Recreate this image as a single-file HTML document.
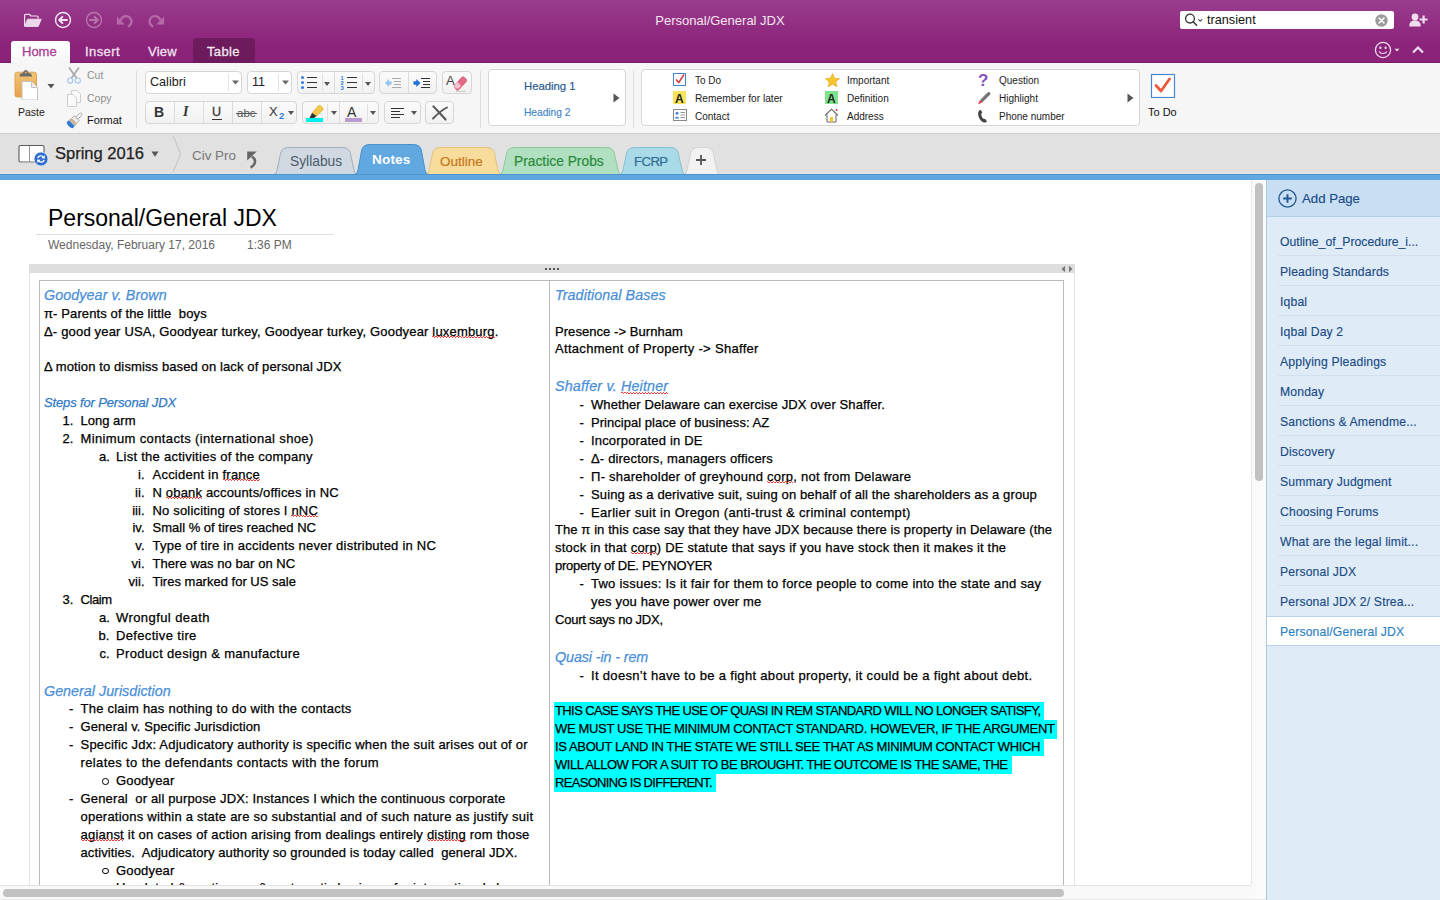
<!DOCTYPE html>
<html><head><meta charset="utf-8">
<style>
*{box-sizing:border-box;margin:0;padding:0}
html,body{width:1440px;height:900px;overflow:hidden;background:#fff;font-family:"Liberation Sans",sans-serif}
.abs{position:absolute}
#titlebar{position:absolute;left:0;top:0;width:1440px;height:63px;background:linear-gradient(#993d8d 0,#8c237a 72%,#8b2279 100%);border-bottom:1px solid #7c1b6b}
#ribbon{position:absolute;left:0;top:63px;width:1440px;height:71px;background:#f6f6f6;border-bottom:1px solid #cfcfcf}
#nbbar{position:absolute;left:0;top:134px;width:1440px;height:40px;background:#e1e1e1}
#blue{position:absolute;left:0;top:174px;width:1440px;height:6px;background:#5fa7de;border-top:1px solid #4b94cf}
#page{position:absolute;left:0;top:180px;width:1251px;height:705px;background:#fff;overflow:hidden}
#vscroll{position:absolute;left:1251px;top:180px;width:15px;height:705px;background:#fafafa;border-left:1px solid #e6e6e6}
#hscroll{position:absolute;left:0;top:885px;width:1251px;height:15px;background:#f9f9f9;border-top:1px solid #e3e3e3}
#sidebar{position:absolute;left:1266px;top:180px;width:174px;height:720px;background:#dfebf6;border-left:1px solid #a9c8e6}
.btn{border:1px solid #d6d6d6;border-radius:4px;background:linear-gradient(#fbfbfb,#f1f1f1)}
#ribbon .abs{}
.ln{position:absolute;white-space:pre;line-height:normal}
.sp{position:relative}.sp::after{content:"";position:absolute;left:0;right:0;top:0.93em;height:2px;background-image:repeating-linear-gradient(90deg,#f0423a 0 1.5px,transparent 1.5px 3px),repeating-linear-gradient(90deg,transparent 0 1.5px,#f0423a 1.5px 3px);background-size:100% 1px,100% 1px;background-position:0 0,0 1px;background-repeat:no-repeat}
</style></head><body>
<div id="titlebar">
<svg class="abs" style="left:23px;top:13px" width="19" height="15" viewBox="0 0 19 15"><path d="M1.6 13 V2.6 Q1.6 1.4 2.8 1.4 H6.4 L8 3 H14 Q15 3 15 4 V5.6" fill="none" stroke="#f2e2f0" stroke-width="1.2" stroke-linejoin="round"/><path d="M1.6 13.4 L4.6 6.2 H18.2 L15.2 13.4 Z" fill="#ecd8ea" stroke="#f2e2f0" stroke-width="0.9" stroke-linejoin="round"/></svg>
<svg class="abs" style="left:54px;top:11px" width="18" height="18" viewBox="0 0 18 18"><circle cx="9" cy="9" r="7.5" fill="none" stroke="#f4e6f2" stroke-width="1.4"/><path d="M13 9 H5.4 M8.4 5.8 L5.2 9 L8.4 12.2" fill="none" stroke="#f4e6f2" stroke-width="1.9" stroke-linecap="round" stroke-linejoin="round"/></svg>
<svg class="abs" style="left:85px;top:11px" width="18" height="18" viewBox="0 0 18 18"><circle cx="9" cy="9" r="7.5" fill="none" stroke="#b977ad" stroke-width="1.3"/><path d="M5 9 H12.6 M9.6 5.8 L12.8 9 L9.6 12.2" fill="none" stroke="#b977ad" stroke-width="1.8" stroke-linecap="round" stroke-linejoin="round"/></svg>
<svg class="abs" style="left:116px;top:12px" width="17" height="16" viewBox="0 0 17 16"><path d="M4.8 8.2 A5.4 5.4 0 1 1 11.8 14.6" fill="none" stroke="#b56aa8" stroke-width="2.3"/><path d="M0.9 4.6 V12.4 H8.7 Z" fill="#b56aa8"/></svg>
<svg class="abs" style="left:148px;top:12px" width="17" height="16" viewBox="0 0 17 16"><path d="M12.2 8.2 A5.4 5.4 0 1 0 5.2 14.6" fill="none" stroke="#b56aa8" stroke-width="2.3"/><path d="M16.1 4.6 V12.4 H8.3 Z" fill="#b56aa8"/></svg>
<div class="abs" style="left:0;top:13px;width:1440px;text-align:center;font-size:13px;color:#f3e6f1;line-height:15px">Personal/General JDX</div>
<div class="abs" style="left:1180px;top:11px;width:214px;height:18px;background:#fff;border-radius:2px"></div>
<svg class="abs" style="left:1184px;top:13px" width="22" height="14" viewBox="0 0 22 14"><circle cx="6" cy="5.6" r="4.4" fill="none" stroke="#333" stroke-width="1.3"/><path d="M9.2 8.8 L12.6 12.2" stroke="#333" stroke-width="1.5" stroke-linecap="round"/><path d="M14.2 6.2 L16.2 8.2 L18.2 6.2" fill="none" stroke="#555" stroke-width="1.1"/></svg>
<div class="abs" style="left:1207px;top:13px;font-size:12.7px;color:#111;line-height:15px">transient</div>
<svg class="abs" style="left:1375px;top:14px" width="13" height="13" viewBox="0 0 13 13"><circle cx="6.5" cy="6.5" r="6.2" fill="#9b9b9b"/><path d="M4 4 L9 9 M9 4 L4 9" stroke="#fff" stroke-width="1.5" stroke-linecap="round"/></svg>
<svg class="abs" style="left:1409px;top:13px" width="19" height="14" viewBox="0 0 19 14"><circle cx="6" cy="4" r="3.4" fill="#efdcec"/><path d="M0.3 13.5 C0.3 9 2.5 7.6 6 7.6 C9.5 7.6 11.7 9 11.7 13.5 Z" fill="#efdcec"/><path d="M14.6 2.5 V10.5 M10.6 6.5 H18.6" stroke="#efdcec" stroke-width="2.2"/></svg>
<div class="abs" style="left:11px;top:41px;width:59px;height:22px;background:linear-gradient(#fff,#f6f6f6);border-radius:3px 3px 0 0"></div>
<div class="abs" style="left:22px;top:44px;font-size:13px;color:#aa3f96;line-height:15px;-webkit-text-stroke:0.3px #aa3f96">Home</div>
<div class="abs" style="left:85px;top:44px;font-size:13px;letter-spacing:0.4px;color:#f1e1ee;line-height:15px;-webkit-text-stroke:0.3px #f1e1ee">Insert</div>
<div class="abs" style="left:148px;top:44px;font-size:13px;letter-spacing:0.2px;color:#f1e1ee;line-height:15px;-webkit-text-stroke:0.3px #f1e1ee">View</div>
<div class="abs" style="left:193px;top:38px;width:62px;height:25px;background:#6d1b5c;border-radius:3px 3px 0 0"></div>
<div class="abs" style="left:207px;top:44px;font-size:13px;letter-spacing:0.35px;color:#f3e6f1;line-height:15px;-webkit-text-stroke:0.3px #f3e6f1">Table</div>
<svg class="abs" style="left:1374px;top:41px" width="32" height="18" viewBox="0 0 32 18"><circle cx="9" cy="9" r="7.6" fill="none" stroke="#efdcec" stroke-width="1.3"/><ellipse cx="6.4" cy="6.8" rx="1.1" ry="1.4" fill="#efdcec"/><ellipse cx="11.6" cy="6.8" rx="1.1" ry="1.4" fill="#efdcec"/><path d="M5.2 10.4 C6.5 13.2 11.5 13.2 12.8 10.4" fill="none" stroke="#efdcec" stroke-width="1.2"/><path d="M20.5 7.8 L25.5 7.8 L23 10.6 Z" fill="#efdcec"/></svg>
<svg class="abs" style="left:1411px;top:45px" width="14" height="10" viewBox="0 0 14 10"><path d="M2 7.5 L7 2.5 L12 7.5" fill="none" stroke="#efdcec" stroke-width="2.2"/></svg>
</div>
<div id="ribbon">
<!-- paste -->
<svg class="abs" style="left:14px;top:6px" width="27" height="31" viewBox="0 0 27 31"><defs><linearGradient id="cb" x1="0" y1="0" x2="0" y2="1"><stop offset="0" stop-color="#f1c476"/><stop offset="1" stop-color="#e6a24a"/></linearGradient></defs><rect x="1" y="3.2" width="21.5" height="24.8" rx="2" fill="url(#cb)" stroke="#d79a45" stroke-width="0.8"/><path d="M5.5 7.5 C5.5 5 7 4 9 4 C9.5 2 10.5 1 11.8 1 C13.1 1 14.1 2 14.6 4 C16.6 4 18 5 18 7.5 Z" fill="#6b6b6b"/><circle cx="11.8" cy="3.6" r="1" fill="#e6b066"/><path d="M8 12.5 H17.5 L23.5 18.5 V31 H8 Z" fill="#fff" stroke="#bdbdbd" stroke-width="0.9"/><path d="M17.5 12.5 V18.5 H23.5" fill="#eee" stroke="#bdbdbd" stroke-width="0.9"/></svg>
<svg class="abs" style="left:47px;top:20px" width="8" height="6" viewBox="0 0 8 6"><path d="M0.5 1 L7.5 1 L4 5.5 Z" fill="#555"/></svg>
<div class="abs" style="left:18px;top:43px;font-size:10.5px;color:#222;line-height:13px">Paste</div>
<svg class="abs" style="left:66px;top:4px" width="16" height="17" viewBox="0 0 16 17"><path d="M3 0.5 L10.5 11 M13 0.5 L5.5 11" stroke="#a9a9a9" stroke-width="1.7"/><circle cx="4.2" cy="13.6" r="2.6" fill="none" stroke="#a9c6e8" stroke-width="1.2"/><circle cx="11.8" cy="13.6" r="2.6" fill="none" stroke="#a9c6e8" stroke-width="1.2"/></svg>
<div class="abs" style="left:87px;top:6px;font-size:10.5px;color:#8e8e8e;line-height:13px">Cut</div>
<svg class="abs" style="left:67px;top:27px" width="15" height="17" viewBox="0 0 15 17"><path d="M4.5 0.5 H10 L13.5 4 V12.5 H4.5 Z" fill="#fafafa" stroke="#cdcdcd" stroke-width="1"/><path d="M0.5 4.5 H6 L9.5 8 V16.5 H0.5 Z" fill="#fafafa" stroke="#cdcdcd" stroke-width="1"/></svg>
<div class="abs" style="left:87px;top:29px;font-size:10.5px;color:#8e8e8e;line-height:13px">Copy</div>
<svg class="abs" style="left:64px;top:49px" width="20" height="18" viewBox="0 0 20 18"><g transform="rotate(45 10 9)"><rect x="8.6" y="-1.5" width="2.8" height="7" rx="1.4" fill="#fdfdfd" stroke="#8a8a8a" stroke-width="0.8"/><rect x="6.5" y="5" width="7" height="4" fill="#ececec" stroke="#9a9a9a" stroke-width="0.7"/><rect x="5.8" y="9" width="8.4" height="3.2" fill="#cdb79c"/><path d="M5.8 12.2 H14.2 V15.2 Q10 17.4 5.8 15.2 Z" fill="#2c78d4"/></g></svg>
<div class="abs" style="left:87px;top:51px;font-size:11px;color:#111;line-height:13px">Format</div>
<div class="abs" style="left:136px;top:8px;width:1px;height:57px;background:#dedede"></div>
<!-- font -->
<div class="abs btn" style="left:145px;top:8px;width:97px;height:23px;background:#fff"></div>
<div class="abs" style="left:150px;top:12px;font-size:12.6px;color:#222;line-height:15px">Calibri</div>
<div class="abs" style="left:228px;top:11px;width:1px;height:17px;background:#e2e2e2"></div>
<svg class="abs" style="left:232px;top:17px" width="7" height="5" viewBox="0 0 7 5"><path d="M0 0.5 H7 L3.5 4.5 Z" fill="#666"/></svg>
<div class="abs btn" style="left:247px;top:8px;width:45px;height:23px;background:#fff"></div>
<div class="abs" style="left:252px;top:12px;font-size:12.6px;color:#222;line-height:15px">11</div>
<div class="abs" style="left:278px;top:11px;width:1px;height:17px;background:#e2e2e2"></div>
<svg class="abs" style="left:282px;top:17px" width="7" height="5" viewBox="0 0 7 5"><path d="M0 0.5 H7 L3.5 4.5 Z" fill="#666"/></svg>
<!-- lists -->
<div class="abs btn" style="left:297px;top:8px;width:78px;height:23px"></div>
<div class="abs" style="left:334px;top:9px;width:1px;height:21px;background:#dcdcdc"></div>
<svg class="abs" style="left:300px;top:12px" width="20" height="16" viewBox="0 0 20 16"><circle cx="2.5" cy="2.5" r="1.5" fill="#2f7ad8"/><circle cx="2.5" cy="7.5" r="1.5" fill="#2f7ad8"/><circle cx="2.5" cy="12.5" r="1.5" fill="#2f7ad8"/><path d="M7 2.5 H17 M7 7.5 H17 M7 12.5 H17" stroke="#333" stroke-width="1"/></svg>
<div class="abs" style="left:322px;top:11px;width:1px;height:17px;background:#e0e0e0"></div>
<svg class="abs" style="left:324px;top:19px" width="6" height="4" viewBox="0 0 6 4"><path d="M0 0 H6 L3 4 Z" fill="#555"/></svg>
<svg class="abs" style="left:340px;top:11px" width="20" height="18" viewBox="0 0 20 18"><text x="0.5" y="6" font-size="5.8" font-weight="bold" fill="#2f7ad8" font-family="Liberation Sans">1</text><text x="0.5" y="11" font-size="5.8" font-weight="bold" fill="#2f7ad8" font-family="Liberation Sans">2</text><text x="0.5" y="16" font-size="5.8" font-weight="bold" fill="#2f7ad8" font-family="Liberation Sans">3</text><path d="M7 3.5 H17 M7 8.5 H17 M7 13.5 H17" stroke="#333" stroke-width="1"/></svg>
<div class="abs" style="left:362px;top:11px;width:1px;height:17px;background:#e0e0e0"></div>
<svg class="abs" style="left:365px;top:19px" width="6" height="4" viewBox="0 0 6 4"><path d="M0 0 H6 L3 4 Z" fill="#555"/></svg>
<div class="abs btn" style="left:379px;top:8px;width:58px;height:23px"></div>
<div class="abs" style="left:408px;top:9px;width:1px;height:21px;background:#dcdcdc"></div>
<svg class="abs" style="left:384px;top:14px" width="18" height="12" viewBox="0 0 18 12"><path d="M0.8 6 L5 2 V4.3 H7.5 V7.7 H5 V10 Z" fill="#9dc4ee"/><path d="M8 1.5 H17 M10 4.5 H17 M10 7.5 H17 M8 10.5 H17" stroke="#aaa" stroke-width="1"/></svg>
<svg class="abs" style="left:413px;top:14px" width="18" height="12" viewBox="0 0 18 12"><path d="M7.5 6 L3.3 2 V4.3 H0.5 V7.7 H3.3 V10 Z" fill="#1f72d6"/><path d="M8 1.5 H17 M10 4.5 H17 M10 7.5 H17 M8 10.5 H17" stroke="#333" stroke-width="1"/></svg>
<div class="abs btn" style="left:442px;top:8px;width:30px;height:23px"></div>
<svg class="abs" style="left:446px;top:10px" width="22" height="19" viewBox="0 0 22 19"><text x="0" y="12" font-size="13" fill="#444" font-family="Liberation Sans">A</text><path d="M8 13 L15.5 4.5 C16.5 3.5 17.5 3.5 18.5 4.5 L20 6 C21 7 21 8 20 9 L13 16.5 C12 17.5 11 17.5 10 16.5 Z" fill="#e26a86" stroke="#c84c6a" stroke-width="0.6"/><path d="M8 13 L11.5 9 L15 12.8 L13 15 C12 16 11 16 10 15 Z" fill="#f7c3cf"/><path d="M10 18.3 H20" stroke="#bbb" stroke-width="0.8"/></svg>
<!-- row 2 -->
<div class="abs btn" style="left:145px;top:38px;width:152px;height:23px"></div>
<div class="abs" style="left:174px;top:39px;width:1px;height:21px;background:#dcdcdc"></div>
<div class="abs" style="left:203px;top:39px;width:1px;height:21px;background:#dcdcdc"></div>
<div class="abs" style="left:232px;top:39px;width:1px;height:21px;background:#dcdcdc"></div>
<div class="abs" style="left:261px;top:39px;width:1px;height:21px;background:#dcdcdc"></div>
<div class="abs" style="left:154px;top:41px;font-size:14px;font-weight:bold;color:#333;line-height:16px">B</div>
<div class="abs" style="left:183px;top:41px;font-size:14px;font-style:italic;font-weight:bold;font-family:'Liberation Serif';color:#333;line-height:16px">I</div>
<div class="abs" style="left:212px;top:42px;font-size:12.5px;color:#333;line-height:15px;-webkit-text-stroke:0.3px #333">U</div>
<div class="abs" style="left:212px;top:56px;width:10px;height:1px;background:#333"></div>
<div class="abs" style="left:237px;top:43px;font-size:11.5px;color:#555;line-height:15px">abc</div>
<div class="abs" style="left:236px;top:50px;width:21px;height:1px;background:#555"></div>
<div class="abs" style="left:269px;top:41px;font-size:13px;color:#333;line-height:15px">X</div>
<div class="abs" style="left:279px;top:47px;font-size:9.5px;font-weight:bold;color:#2f7fd8;line-height:12px">2</div>
<svg class="abs" style="left:288px;top:48px" width="6" height="4" viewBox="0 0 6 4"><path d="M0 0 H6 L3 4 Z" fill="#555"/></svg>
<div class="abs btn" style="left:302px;top:38px;width:77px;height:23px"></div>
<div class="abs" style="left:339px;top:39px;width:1px;height:21px;background:#dcdcdc"></div>
<svg class="abs" style="left:305px;top:41px" width="20" height="18" viewBox="0 0 20 18"><path d="M7 9 L13 2 C14 1 15 1 16 2 L17.5 3.5 C18.5 4.5 18.5 5.3 17.5 6.3 L11.5 12 Z" fill="#f3c64c" stroke="#d9a92c" stroke-width="0.6"/><path d="M7 9 L11.5 12 L9 14 L4.5 14 Z" fill="#333"/><rect x="1" y="14" width="17" height="4" fill="#00eeee"/></svg>
<div class="abs" style="left:327px;top:41px;width:1px;height:17px;background:#e0e0e0"></div>
<svg class="abs" style="left:331px;top:48px" width="6" height="4" viewBox="0 0 6 4"><path d="M0 0 H6 L3 4 Z" fill="#555"/></svg>
<svg class="abs" style="left:344px;top:41px" width="20" height="18" viewBox="0 0 20 18"><text x="3" y="12.5" font-size="14" fill="#333" font-family="Liberation Sans">A</text><rect x="1" y="14" width="17" height="4" fill="#b99ace"/></svg>
<div class="abs" style="left:367px;top:41px;width:1px;height:17px;background:#e0e0e0"></div>
<svg class="abs" style="left:370px;top:48px" width="6" height="4" viewBox="0 0 6 4"><path d="M0 0 H6 L3 4 Z" fill="#555"/></svg>
<div class="abs btn" style="left:384px;top:38px;width:37px;height:23px"></div>
<svg class="abs" style="left:391px;top:43px" width="15" height="13" viewBox="0 0 15 13"><path d="M0 2.5 H13 M0 5.5 H9 M0 8.5 H13 M0 11.5 H9" stroke="#333" stroke-width="1"/></svg>
<svg class="abs" style="left:411px;top:48px" width="6" height="4" viewBox="0 0 6 4"><path d="M0 0 H6 L3 4 Z" fill="#555"/></svg>
<div class="abs btn" style="left:425px;top:38px;width:29px;height:23px"></div>
<svg class="abs" style="left:431px;top:42px" width="18" height="16" viewBox="0 0 18 16"><path d="M2.5 1.5 C6 5 10 9.5 14.5 14.5" fill="none" stroke="#5a5a5a" stroke-width="2.2" stroke-linecap="round"/><path d="M16 2.5 C11 5 6 9.5 2 13.5" fill="none" stroke="#5a5a5a" stroke-width="1.9" stroke-linecap="round"/></svg>
<div class="abs" style="left:480px;top:8px;width:1px;height:57px;background:#dedede"></div>
<!-- styles -->
<div class="abs btn" style="left:488px;top:6px;width:138px;height:57px;background:#fff"></div>
<div class="abs" style="left:524px;top:16px;font-size:11.3px;color:#2b5a8f;line-height:14px;-webkit-text-stroke:0.2px #2b5a8f">Heading 1</div>
<div class="abs" style="left:524px;top:43px;font-size:10.2px;color:#3f86cc;line-height:13px;-webkit-text-stroke:0.15px #3f86cc">Heading 2</div>
<svg class="abs" style="left:613px;top:30px" width="7" height="10" viewBox="0 0 7 10"><path d="M0.5 0.5 L6.5 5 L0.5 9.5 Z" fill="#555"/></svg>
<div class="abs" style="left:633px;top:8px;width:1px;height:57px;background:#dedede"></div>
<!-- tags -->
<div class="abs btn" style="left:641px;top:6px;width:499px;height:57px;background:#fff"></div>
<svg class="abs" style="left:673px;top:10px" width="14" height="13" viewBox="0 0 14 13"><rect x="0.5" y="0.5" width="12" height="12" fill="#fff" stroke="#4a86cf" stroke-width="1"/><path d="M3 6.5 L5.8 9.5 L11 1.5" fill="none" stroke="#e2343c" stroke-width="1.5"/></svg>
<div class="abs" style="left:695px;top:12px;font-size:10px;color:#222;line-height:12px">To Do</div>
<svg class="abs" style="left:673px;top:28px" width="13" height="13" viewBox="0 0 13 13"><rect x="0" y="0" width="13" height="13" fill="#f7e45a"/><text x="2" y="11.5" font-size="12" font-weight="bold" fill="#222" font-family="Liberation Sans">A</text></svg>
<div class="abs" style="left:695px;top:30px;font-size:10.2px;color:#222;line-height:12px">Remember for later</div>
<svg class="abs" style="left:673px;top:46px" width="14" height="12" viewBox="0 0 14 12"><rect x="0.5" y="0.5" width="13" height="11" fill="#fff" stroke="#888" stroke-width="1"/><circle cx="4" cy="4.2" r="1.5" fill="#4a86cf"/><path d="M1.8 9.5 C1.8 7 6.2 7 6.2 9.5 Z" fill="#4a86cf"/><path d="M7.5 3.5 H12 M7.5 6 H12 M7.5 8.5 H12" stroke="#888" stroke-width="0.9"/></svg>
<div class="abs" style="left:695px;top:48px;font-size:10px;color:#222;line-height:12px">Contact</div>
<svg class="abs" style="left:825px;top:10px" width="15" height="15" viewBox="0 0 15 15"><path d="M7.5 0.5 L9.6 5.2 L14.6 5.6 L10.8 8.9 L12 13.9 L7.5 11.2 L3 13.9 L4.2 8.9 L0.4 5.6 L5.4 5.2 Z" fill="#f5c530" stroke="#e0a81a" stroke-width="0.6"/></svg>
<div class="abs" style="left:847px;top:12px;font-size:10px;color:#222;line-height:12px">Important</div>
<svg class="abs" style="left:825px;top:28px" width="13" height="13" viewBox="0 0 13 13"><rect x="0" y="0" width="13" height="13" fill="#7ee48c"/><text x="2" y="11.5" font-size="12" font-weight="bold" fill="#222" font-family="Liberation Sans">A</text></svg>
<div class="abs" style="left:847px;top:30px;font-size:10px;color:#222;line-height:12px">Definition</div>
<svg class="abs" style="left:824px;top:45px" width="15" height="15" viewBox="0 0 15 15"><path d="M1 7.5 L7.5 1.2 L14 7.5" fill="none" stroke="#666" stroke-width="1.1"/><path d="M3 6.5 V14 H12 V6.5" fill="#fff" stroke="#666" stroke-width="1"/><rect x="6" y="9" width="3" height="5" fill="#f5c530"/><circle cx="12.6" cy="2" r="1" fill="#e2343c"/></svg>
<div class="abs" style="left:847px;top:48px;font-size:10px;color:#222;line-height:12px">Address</div>
<svg class="abs" style="left:978px;top:9px" width="12" height="15" viewBox="0 0 12 15"><text x="0" y="14" font-size="17" font-weight="bold" fill="#8a4fbf" font-family="Liberation Sans">?</text></svg>
<div class="abs" style="left:999px;top:12px;font-size:10px;color:#222;line-height:12px">Question</div>
<svg class="abs" style="left:976px;top:28px" width="15" height="14" viewBox="0 0 15 14"><path d="M4 9 L11.5 1.5 C12.3 0.7 13.3 0.7 14 1.4 C14.7 2.1 14.7 3 14 3.8 L6.5 11.3 Z" fill="#777"/><path d="M4 9 L6.5 11.3 L2 13.5 Z" fill="#e2343c"/></svg>
<div class="abs" style="left:999px;top:30px;font-size:10px;color:#222;line-height:12px">Highlight</div>
<svg class="abs" style="left:977px;top:46px" width="13" height="14" viewBox="0 0 13 14"><path d="M3.5 0.8 C1.5 1.5 0.8 3.5 1.2 6 C1.8 9.5 4 12.5 7 13.5 C8.5 13.8 9.5 13.2 10 12.6 L8 9.8 C7.4 10.2 6.6 10.2 6 9.6 C5 8.4 4.2 6.6 4.3 5 C4.4 4.3 4.8 3.8 5.4 3.6 Z" fill="#444"/></svg>
<div class="abs" style="left:999px;top:48px;font-size:10px;color:#222;line-height:12px">Phone number</div>
<svg class="abs" style="left:1127px;top:30px" width="7" height="10" viewBox="0 0 7 10"><path d="M0.5 0.5 L6.5 5 L0.5 9.5 Z" fill="#555"/></svg>
<svg class="abs" style="left:1150px;top:10px" width="26" height="25" viewBox="0 0 26 25"><rect x="1.5" y="1.5" width="23" height="23" fill="#fff" stroke="#4a86cf" stroke-width="1.2"/><path d="M6 12.5 L11 18 L19.5 6" fill="none" stroke="#ea5a3a" stroke-width="2.8" stroke-linecap="round" stroke-linejoin="round"/></svg>
<div class="abs" style="left:1148px;top:43px;font-size:11px;color:#111;line-height:13px">To Do</div>
</div>
<div id="nbbar"><svg class="abs" style="left:0;top:0" width="1440" height="40" viewBox="0 134 1440 40"><path d="M274 174.5 Q276.5 174 277 170 L280.8 152.5 Q282.5 147.5 289 147.5 L342 147.5 Q348.5 147.5 350.2 152.5 L354 170 Q354.5 174 357 174.5 Z" fill="#d0d8e1" stroke="#a3afbc" stroke-width="1"/><path d="M426 174.5 Q428.5 174 429 170 L432.8 152.5 Q434.5 147.5 441 147.5 L486 147.5 Q492.5 147.5 494.2 152.5 L498 170 Q498.5 174 501 174.5 Z" fill="#f8dc9b" stroke="#e5c27a" stroke-width="1"/><path d="M500 174.5 Q502.5 174 503 170 L506.8 152.5 Q508.5 147.5 515 147.5 L606 147.5 Q612.5 147.5 614.2 152.5 L618 170 Q618.5 174 621 174.5 Z" fill="#b0e0c0" stroke="#8dcaa0" stroke-width="1"/><path d="M620 174.5 Q622.5 174 623 170 L626.8 152.5 Q628.5 147.5 635 147.5 L670 147.5 Q676.5 147.5 678.2 152.5 L682 170 Q682.5 174 685 174.5 Z" fill="#a8dae8" stroke="#84c2d3" stroke-width="1"/><path d="M684 174.5 Q686.5 174 687 170 L690.8 152.5 Q692.5 147.5 699 147.5 L705 147.5 Q711.5 147.5 713.2 152.5 L717 170 Q717.5 174 720 174.5 Z" fill="#f2f2f2" stroke="#d2d2d2" stroke-width="1"/><path d="M355 174.5 Q357.5 174 358 170 L361.8 149.5 Q363.5 144.5 370 144.5 L413 144.5 Q419.5 144.5 421.2 149.5 L425 170 Q425.5 174 428 174.5 Z" fill="#62a8e0" stroke="#4690cf" stroke-width="1"/></svg>
<svg class="abs" style="left:18px;top:10px" width="32" height="25" viewBox="0 0 32 25"><rect x="1" y="1.5" width="25" height="16.5" rx="1.5" fill="#fff" stroke="#5a5a5a" stroke-width="1.1"/><path d="M11.5 1.8 V17.8" stroke="#8a8a8a" stroke-width="0.9"/><path d="M2 18.6 H25" stroke="#bbb" stroke-width="1"/><circle cx="23" cy="15" r="7" fill="#2f6dcf" stroke="#e9eef8" stroke-width="0.8"/><path d="M19.2 14 C19.6 11.6 22.8 10.4 25.4 12.2 L26.6 11 L26.8 14.4 L23.4 14.2 L24.6 13 C22.8 12 21 12.6 20.6 14.2 Z M26.8 16 C26.4 18.4 23.2 19.6 20.6 17.8 L19.4 19 L19.2 15.6 L22.6 15.8 L21.4 17 C23.2 18 25 17.4 25.4 15.8 Z" fill="#fff"/></svg>
<div class="abs" style="left:55px;top:10px;font-size:16.5px;color:#222;line-height:19px;-webkit-text-stroke:0.25px #222">Spring 2016</div>
<svg class="abs" style="left:151px;top:17px" width="8" height="6" viewBox="0 0 8 6"><path d="M0.5 0.5 H7.5 L4 5.8 Z" fill="#555"/></svg>
<svg class="abs" style="left:172px;top:2px" width="10" height="36" viewBox="0 0 10 36"><path d="M1.2 0 L8.6 18 L1.2 36" fill="none" stroke="#c2c2c2" stroke-width="1"/></svg>
<div class="abs" style="left:192px;top:14px;font-size:13.4px;color:#777;line-height:16px">Civ Pro</div>
<svg class="abs" style="left:245px;top:17px" width="14" height="18" viewBox="0 0 14 18"><path d="M2.2 0.4 H11.8 L2.2 9.6 Z" fill="#666"/><path d="M6.8 5.6 C11 7.5 11.6 13.5 5.6 16.6" fill="none" stroke="#666" stroke-width="2.5"/></svg>
<div class="abs" style="left:290px;top:20px;font-size:13.8px;color:#4b5b6b;line-height:16px">Syllabus</div>
<div class="abs" style="left:372px;top:18px;font-size:13.5px;letter-spacing:0.2px;font-weight:bold;color:#fff;line-height:16px">Notes</div>
<div class="abs" style="left:440px;top:20px;font-size:13.5px;color:#c5781c;line-height:16px;-webkit-text-stroke:0.2px #c5781c">Outline</div>
<div class="abs" style="left:514px;top:20px;font-size:13.8px;color:#2a8a3e;line-height:16px;-webkit-text-stroke:0.2px #2a8a3e">Practice Probs</div>
<div class="abs" style="left:634px;top:20px;font-size:13.2px;letter-spacing:-0.6px;color:#2c6e94;line-height:16px;-webkit-text-stroke:0.2px #2c6e94">FCRP</div>
<svg class="abs" style="left:695px;top:20px" width="12" height="12" viewBox="0 0 12 12"><path d="M6 1 V11 M1 6 H11" stroke="#555" stroke-width="1.8"/></svg>
</div>
<div id="blue"></div>
<div id="page">
<div class="ln" style="left:48px;top:24.78px;font-size:23px;color:#000">Personal/General JDX</div>
<div class="abs" style="left:36px;top:54px;width:297px;height:1px;background:#dcdcdc"></div>
<div class="ln" style="left:48px;top:58.04px;font-size:12px;color:#666">Wednesday, February 17, 2016</div>
<div class="ln" style="left:247px;top:58.04px;font-size:12px;color:#666">1:36 PM</div>
<div class="abs" style="left:29px;top:84px;width:1046px;height:640px;border-left:1px solid #e4e4e4;border-right:1px solid #e4e4e4;background:#fff"></div>
<div class="abs" style="left:29px;top:84px;width:1046px;height:9px;background:#dedede"></div>
<div class="abs" style="left:545px;top:88px;width:14px;height:2px;background-image:linear-gradient(90deg,#555 0,#555 2px,transparent 2px);background-size:4px 2px"></div>
<svg class="abs" style="left:1060px;top:85px" width="14" height="8" viewBox="0 0 14 8"><path d="M5 0.8 L1.5 4 L5 7.2 Z M9 0.8 L12.5 4 L9 7.2 Z" fill="#777"/></svg>
<div class="abs" style="left:39px;top:100px;width:1025px;height:620px;border:1px solid #b9b9b9"></div>
<div class="abs" style="left:549px;top:100px;width:1px;height:620px;background:#b9b9b9"></div>
<div id="content" class="abs" style="left:0;top:-180px;width:1251px;height:1065px">
<div class="ln" style="left:44px;top:286.76px;font-size:14.3px;font-style:italic;color:#4a8fd7;-webkit-text-stroke:0.25px #4a8fd7;letter-spacing:0.086px">Goodyear v. Brown</div>
<div class="ln" style="left:44px;top:305.63px;font-size:13.0px;color:#000;-webkit-text-stroke:0.25px #000;letter-spacing:0.118px">π- Parents of the little  boys</div>
<div class="ln" style="left:44px;top:323.53px;font-size:13.0px;color:#000;-webkit-text-stroke:0.25px #000;letter-spacing:0.179px">Δ- good year USA, Goodyear turkey, Goodyear turkey, Goodyear <span class="sp">luxemburg</span>.</div>
<div class="ln" style="left:44px;top:359.33px;font-size:13.0px;color:#000;-webkit-text-stroke:0.25px #000;letter-spacing:0.114px">Δ motion to dismiss based on lack of personal JDX</div>
<div class="ln" style="left:44px;top:395.13px;font-size:13.0px;font-style:italic;color:#2e78c6;-webkit-text-stroke:0.25px #2e78c6;letter-spacing:-0.144px">Steps for Personal JDX</div>
<div class="ln" style="left:80.5px;top:413.03px;font-size:13.0px;color:#000;-webkit-text-stroke:0.25px #000;letter-spacing:0.011px">Long arm</div>
<div class="ln" style="left:62.5px;top:413.03px;font-size:13.0px;color:#000;-webkit-text-stroke:0.25px #000">1.</div>
<div class="ln" style="left:80.5px;top:430.93px;font-size:13.0px;color:#000;-webkit-text-stroke:0.25px #000;letter-spacing:0.365px">Minimum contacts (international shoe)</div>
<div class="ln" style="left:62.5px;top:430.93px;font-size:13.0px;color:#000;-webkit-text-stroke:0.25px #000">2.</div>
<div class="ln" style="left:116px;top:448.83px;font-size:13.0px;color:#000;-webkit-text-stroke:0.25px #000;letter-spacing:0.264px">List the activities of the company</div>
<div class="ln" style="left:99px;top:448.83px;font-size:13.0px;color:#000;-webkit-text-stroke:0.25px #000">a.</div>
<div class="ln" style="left:152.5px;top:466.73px;font-size:13.0px;color:#000;-webkit-text-stroke:0.25px #000;letter-spacing:0.233px">Accident in <span class="sp">france</span></div>
<div class="ln" style="left:104.5px;width:40px;text-align:right;top:466.73px;font-size:13.0px;color:#000;-webkit-text-stroke:0.25px #000">i.</div>
<div class="ln" style="left:152.5px;top:484.63px;font-size:13.0px;color:#000;-webkit-text-stroke:0.25px #000;letter-spacing:0.171px">N <span class="sp">obank</span> accounts/offices in NC</div>
<div class="ln" style="left:104.5px;width:40px;text-align:right;top:484.63px;font-size:13.0px;color:#000;-webkit-text-stroke:0.25px #000">ii.</div>
<div class="ln" style="left:152.5px;top:502.53px;font-size:13.0px;color:#000;-webkit-text-stroke:0.25px #000;letter-spacing:0.175px">No soliciting of stores I <span class="sp">nNC</span></div>
<div class="ln" style="left:104.5px;width:40px;text-align:right;top:502.53px;font-size:13.0px;color:#000;-webkit-text-stroke:0.25px #000">iii.</div>
<div class="ln" style="left:152.5px;top:520.43px;font-size:13.0px;color:#000;-webkit-text-stroke:0.25px #000;letter-spacing:0.008px">Small % of tires reached NC</div>
<div class="ln" style="left:104.5px;width:40px;text-align:right;top:520.43px;font-size:13.0px;color:#000;-webkit-text-stroke:0.25px #000">iv.</div>
<div class="ln" style="left:152.5px;top:538.33px;font-size:13.0px;color:#000;-webkit-text-stroke:0.25px #000;letter-spacing:0.227px">Type of tire in accidents never distributed in NC</div>
<div class="ln" style="left:104.5px;width:40px;text-align:right;top:538.33px;font-size:13.0px;color:#000;-webkit-text-stroke:0.25px #000">v.</div>
<div class="ln" style="left:152.5px;top:556.23px;font-size:13.0px;color:#000;-webkit-text-stroke:0.25px #000;letter-spacing:0.051px">There was no bar on NC</div>
<div class="ln" style="left:104.5px;width:40px;text-align:right;top:556.23px;font-size:13.0px;color:#000;-webkit-text-stroke:0.25px #000">vi.</div>
<div class="ln" style="left:152.5px;top:574.13px;font-size:13.0px;color:#000;-webkit-text-stroke:0.25px #000;letter-spacing:0.005px">Tires marked for US sale</div>
<div class="ln" style="left:104.5px;width:40px;text-align:right;top:574.13px;font-size:13.0px;color:#000;-webkit-text-stroke:0.25px #000">vii.</div>
<div class="ln" style="left:80.5px;top:592.03px;font-size:13.0px;color:#000;-webkit-text-stroke:0.25px #000;letter-spacing:-0.384px">Claim</div>
<div class="ln" style="left:62.5px;top:592.03px;font-size:13.0px;color:#000;-webkit-text-stroke:0.25px #000">3.</div>
<div class="ln" style="left:116px;top:609.93px;font-size:13.0px;color:#000;-webkit-text-stroke:0.25px #000;letter-spacing:0.420px">Wrongful death</div>
<div class="ln" style="left:99px;top:609.93px;font-size:13.0px;color:#000;-webkit-text-stroke:0.25px #000">a.</div>
<div class="ln" style="left:116px;top:627.83px;font-size:13.0px;color:#000;-webkit-text-stroke:0.25px #000;letter-spacing:0.340px">Defective tire</div>
<div class="ln" style="left:98.5px;top:627.83px;font-size:13.0px;color:#000;-webkit-text-stroke:0.25px #000">b.</div>
<div class="ln" style="left:116px;top:645.73px;font-size:13.0px;color:#000;-webkit-text-stroke:0.25px #000;letter-spacing:0.326px">Product design &amp; manufacture</div>
<div class="ln" style="left:99.5px;top:645.73px;font-size:13.0px;color:#000;-webkit-text-stroke:0.25px #000">c.</div>
<div class="ln" style="left:44px;top:682.56px;font-size:14.3px;font-style:italic;color:#4a8fd7;-webkit-text-stroke:0.25px #4a8fd7;letter-spacing:0.018px">General Jurisdiction</div>
<div class="ln" style="left:80.5px;top:701.43px;font-size:13.0px;color:#000;-webkit-text-stroke:0.25px #000;letter-spacing:0.242px">The claim has nothing to do with the contacts</div>
<div class="ln" style="left:69px;top:701.43px;font-size:13.0px;color:#000;-webkit-text-stroke:0.25px #000">-</div>
<div class="ln" style="left:80.5px;top:719.33px;font-size:13.0px;color:#000;-webkit-text-stroke:0.25px #000;letter-spacing:0.097px">General v. Specific Jurisdiction</div>
<div class="ln" style="left:69px;top:719.33px;font-size:13.0px;color:#000;-webkit-text-stroke:0.25px #000">-</div>
<div class="ln" style="left:80.5px;top:737.23px;font-size:13.0px;color:#000;-webkit-text-stroke:0.25px #000;letter-spacing:0.210px">Specific Jdx: Adjudicatory authority is specific when the suit arises out of or</div>
<div class="ln" style="left:69px;top:737.23px;font-size:13.0px;color:#000;-webkit-text-stroke:0.25px #000">-</div>
<div class="ln" style="left:80.5px;top:755.13px;font-size:13.0px;color:#000;-webkit-text-stroke:0.25px #000;letter-spacing:0.371px">relates to the defendants contacts with the forum</div>
<div class="ln" style="left:116px;top:773.03px;font-size:13.0px;color:#000;-webkit-text-stroke:0.25px #000;letter-spacing:0.172px">Goodyear</div>
<div class="abs" style="left:102px;top:778.30px;width:6.5px;height:6.5px;border:1px solid #000;border-radius:50%"></div>
<div class="ln" style="left:80.5px;top:790.93px;font-size:13.0px;color:#000;-webkit-text-stroke:0.25px #000;letter-spacing:0.151px">General  or all purpose JDX: Instances I which the continuous corporate</div>
<div class="ln" style="left:69px;top:790.93px;font-size:13.0px;color:#000;-webkit-text-stroke:0.25px #000">-</div>
<div class="ln" style="left:80.5px;top:808.83px;font-size:13.0px;color:#000;-webkit-text-stroke:0.25px #000;letter-spacing:0.224px">operations within a state are so substantial and of such nature as justify suit</div>
<div class="ln" style="left:80.5px;top:826.73px;font-size:13.0px;color:#000;-webkit-text-stroke:0.25px #000;letter-spacing:0.217px"><span class="sp">agianst</span> it on cases of action arising from dealings entirely <span class="sp">disting</span> rom those</div>
<div class="ln" style="left:80.5px;top:844.63px;font-size:13.0px;color:#000;-webkit-text-stroke:0.25px #000;letter-spacing:0.101px">activities.  Adjudicatory authority so grounded is today called  general JDX.</div>
<div class="ln" style="left:116px;top:862.53px;font-size:13.0px;color:#000;-webkit-text-stroke:0.25px #000;letter-spacing:0.172px">Goodyear</div>
<div class="abs" style="left:102px;top:867.80px;width:6.5px;height:6.5px;border:1px solid #000;border-radius:50%"></div>
<div class="ln" style="left:116px;top:880.43px;font-size:13.0px;color:#000;-webkit-text-stroke:0.25px #000;letter-spacing:0.150px">Unrelated &amp; continuous &amp; systematic business for international sh</div>
<div class="abs" style="left:102px;top:885.70px;width:6.5px;height:6.5px;border:1px solid #000;border-radius:50%"></div>
<div class="ln" style="left:555px;top:286.76px;font-size:14.3px;font-style:italic;color:#4a8fd7;-webkit-text-stroke:0.25px #4a8fd7;letter-spacing:0.075px">Traditional Bases</div>
<div class="ln" style="left:555px;top:323.53px;font-size:13.0px;color:#000;-webkit-text-stroke:0.25px #000;letter-spacing:0.060px">Presence -&gt; Burnham</div>
<div class="ln" style="left:555px;top:341.43px;font-size:13.0px;color:#000;-webkit-text-stroke:0.25px #000;letter-spacing:0.301px">Attachment of Property -&gt; Shaffer</div>
<div class="ln" style="left:555px;top:378.26px;font-size:14.3px;font-style:italic;color:#4a8fd7;-webkit-text-stroke:0.25px #4a8fd7;letter-spacing:0.171px">Shaffer v. <span class="sp">Heitner</span></div>
<div class="ln" style="left:591px;top:397.13px;font-size:13.0px;color:#000;-webkit-text-stroke:0.25px #000;letter-spacing:0.093px">Whether Delaware can exercise JDX over Shaffer.</div>
<div class="ln" style="left:579.5px;top:397.13px;font-size:13.0px;color:#000;-webkit-text-stroke:0.25px #000">-</div>
<div class="ln" style="left:591px;top:415.03px;font-size:13.0px;color:#000;-webkit-text-stroke:0.25px #000;letter-spacing:0.038px">Principal place of business: AZ</div>
<div class="ln" style="left:579.5px;top:415.03px;font-size:13.0px;color:#000;-webkit-text-stroke:0.25px #000">-</div>
<div class="ln" style="left:591px;top:432.93px;font-size:13.0px;color:#000;-webkit-text-stroke:0.25px #000;letter-spacing:0.176px">Incorporated in DE</div>
<div class="ln" style="left:579.5px;top:432.93px;font-size:13.0px;color:#000;-webkit-text-stroke:0.25px #000">-</div>
<div class="ln" style="left:591px;top:450.83px;font-size:13.0px;color:#000;-webkit-text-stroke:0.25px #000;letter-spacing:0.167px">Δ- directors, managers officers</div>
<div class="ln" style="left:579.5px;top:450.83px;font-size:13.0px;color:#000;-webkit-text-stroke:0.25px #000">-</div>
<div class="ln" style="left:591px;top:468.73px;font-size:13.0px;color:#000;-webkit-text-stroke:0.25px #000;letter-spacing:0.245px">Π- shareholder of greyhound <span class="sp">corp</span>, not from Delaware</div>
<div class="ln" style="left:579.5px;top:468.73px;font-size:13.0px;color:#000;-webkit-text-stroke:0.25px #000">-</div>
<div class="ln" style="left:591px;top:486.63px;font-size:13.0px;color:#000;-webkit-text-stroke:0.25px #000;letter-spacing:0.121px">Suing as a derivative suit, suing on behalf of all the shareholders as a group</div>
<div class="ln" style="left:579.5px;top:486.63px;font-size:13.0px;color:#000;-webkit-text-stroke:0.25px #000">-</div>
<div class="ln" style="left:591px;top:504.53px;font-size:13.0px;color:#000;-webkit-text-stroke:0.25px #000;letter-spacing:0.309px">Earlier suit in Oregon (anti-trust &amp; criminal contempt)</div>
<div class="ln" style="left:579.5px;top:504.53px;font-size:13.0px;color:#000;-webkit-text-stroke:0.25px #000">-</div>
<div class="ln" style="left:555px;top:522.43px;font-size:13.0px;color:#000;-webkit-text-stroke:0.25px #000;letter-spacing:0.090px">The π in this case say that they have JDX because there is property in Delaware (the</div>
<div class="ln" style="left:555px;top:540.33px;font-size:13.0px;color:#000;-webkit-text-stroke:0.25px #000;letter-spacing:0.197px">stock in that <span class="sp">corp</span>) DE statute that says if you have stock then it makes it the</div>
<div class="ln" style="left:555px;top:558.23px;font-size:13.0px;color:#000;-webkit-text-stroke:0.25px #000;letter-spacing:-0.251px">property of DE. PEYNOYER</div>
<div class="ln" style="left:591px;top:576.13px;font-size:13.0px;color:#000;-webkit-text-stroke:0.25px #000;letter-spacing:0.243px">Two issues: Is it fair for them to force people to come into the state and say</div>
<div class="ln" style="left:579.5px;top:576.13px;font-size:13.0px;color:#000;-webkit-text-stroke:0.25px #000">-</div>
<div class="ln" style="left:591px;top:594.03px;font-size:13.0px;color:#000;-webkit-text-stroke:0.25px #000;letter-spacing:0.164px">yes you have power over me</div>
<div class="ln" style="left:555px;top:611.93px;font-size:13.0px;color:#000;-webkit-text-stroke:0.25px #000;letter-spacing:-0.235px">Court says no JDX,</div>
<div class="ln" style="left:555px;top:648.76px;font-size:14.3px;font-style:italic;color:#4a8fd7;-webkit-text-stroke:0.25px #4a8fd7;letter-spacing:-0.096px">Quasi -in - rem</div>
<div class="ln" style="left:591px;top:667.63px;font-size:13.0px;color:#000;-webkit-text-stroke:0.25px #000;letter-spacing:0.320px">It doesn’t have to be a fight about property, it could be a fight about debt.</div>
<div class="ln" style="left:579.5px;top:667.63px;font-size:13.0px;color:#000;-webkit-text-stroke:0.25px #000">-</div>
<div class="abs" style="left:554px;top:702.10px;width:490.0px;height:18.6px;background:#00ffff"></div>
<div class="ln" style="left:555px;top:703.43px;font-size:13.0px;color:#000;-webkit-text-stroke:0.25px #000;letter-spacing:-0.605px">THIS CASE SAYS THE USE OF QUASI IN REM STANDARD WILL NO LONGER SATISFY,</div>
<div class="abs" style="left:554px;top:720.00px;width:503.4px;height:18.6px;background:#00ffff"></div>
<div class="ln" style="left:555px;top:721.33px;font-size:13.0px;color:#000;-webkit-text-stroke:0.25px #000;letter-spacing:-0.343px">WE MUST USE THE MINIMUM CONTACT STANDARD. HOWEVER, IF THE ARGUMENT</div>
<div class="abs" style="left:554px;top:737.90px;width:490.0px;height:18.6px;background:#00ffff"></div>
<div class="ln" style="left:555px;top:739.23px;font-size:13.0px;color:#000;-webkit-text-stroke:0.25px #000;letter-spacing:-0.376px">IS ABOUT LAND IN THE STATE WE STILL SEE THAT AS MINIMUM CONTACT WHICH</div>
<div class="abs" style="left:554px;top:755.80px;width:458.3px;height:18.6px;background:#00ffff"></div>
<div class="ln" style="left:555px;top:757.13px;font-size:13.0px;color:#000;-webkit-text-stroke:0.25px #000;letter-spacing:-0.488px">WILL ALLOW FOR A SUIT TO BE BROUGHT. THE OUTCOME IS THE SAME, THE</div>
<div class="abs" style="left:554px;top:773.70px;width:162.1px;height:18.6px;background:#00ffff"></div>
<div class="ln" style="left:555px;top:775.03px;font-size:13.0px;color:#000;-webkit-text-stroke:0.25px #000;letter-spacing:-0.688px">REASONING IS DIFFERENT.</div>
</div>
</div>
<div id="vscroll"><div class="abs" style="left:3px;top:3px;width:8px;height:298px;background:#c1c1c1;border-radius:4px"></div></div>
<div id="hscroll"><div class="abs" style="left:3px;top:3px;width:1061px;height:8px;background:#c1c1c1;border-radius:4px"></div></div>
<div class="abs" style="left:1251px;top:885px;width:15px;height:15px;background:#fafafa"></div>
<div class="abs" style="left:0;top:899px;width:1266px;height:1px;background:#e8e8e8"></div>
<div id="sidebar">
<div class="abs" style="left:0;top:0;width:173px;height:37px;background:#c8def3;border-bottom:1px solid #b3cfea"></div>
<svg class="abs" style="left:11px;top:9px" width="19" height="19" viewBox="0 0 19 19"><circle cx="9.5" cy="9.5" r="8.6" fill="none" stroke="#1f568f" stroke-width="1.3"/><path d="M9.5 5.2 V13.8 M5.2 9.5 H13.8" stroke="#1f568f" stroke-width="1.9"/></svg>
<div class="ln" style="left:35px;top:11px;font-size:13.2px;color:#1b4b86;-webkit-text-stroke:0.15px #1b4b86">Add Page</div>
<div class="abs" style="left:11px;top:75px;width:162px;height:1px;background:#d0e0f0"></div>
<div class="ln" style="left:13px;top:54.8px;font-size:12.2px;letter-spacing:0px;color:#1b4b86;-webkit-text-stroke:0.15px #1b4b86">Outline_of_Procedure_i...</div>
<div class="abs" style="left:11px;top:105px;width:162px;height:1px;background:#d0e0f0"></div>
<div class="ln" style="left:13px;top:84.8px;font-size:12.2px;letter-spacing:0.15px;color:#1b4b86;-webkit-text-stroke:0.15px #1b4b86">Pleading Standards</div>
<div class="abs" style="left:11px;top:135px;width:162px;height:1px;background:#d0e0f0"></div>
<div class="ln" style="left:13px;top:114.8px;font-size:12.2px;letter-spacing:0.15px;color:#1b4b86;-webkit-text-stroke:0.15px #1b4b86">Iqbal</div>
<div class="abs" style="left:11px;top:165px;width:162px;height:1px;background:#d0e0f0"></div>
<div class="ln" style="left:13px;top:144.8px;font-size:12.2px;letter-spacing:0.15px;color:#1b4b86;-webkit-text-stroke:0.15px #1b4b86">Iqbal Day 2</div>
<div class="abs" style="left:11px;top:195px;width:162px;height:1px;background:#d0e0f0"></div>
<div class="ln" style="left:13px;top:174.8px;font-size:12.2px;letter-spacing:0.15px;color:#1b4b86;-webkit-text-stroke:0.15px #1b4b86">Applying Pleadings</div>
<div class="abs" style="left:11px;top:225px;width:162px;height:1px;background:#d0e0f0"></div>
<div class="ln" style="left:13px;top:204.8px;font-size:12.2px;letter-spacing:0.15px;color:#1b4b86;-webkit-text-stroke:0.15px #1b4b86">Monday</div>
<div class="abs" style="left:11px;top:255px;width:162px;height:1px;background:#d0e0f0"></div>
<div class="ln" style="left:13px;top:234.8px;font-size:12.2px;letter-spacing:0.15px;color:#1b4b86;-webkit-text-stroke:0.15px #1b4b86">Sanctions &amp; Amendme...</div>
<div class="abs" style="left:11px;top:285px;width:162px;height:1px;background:#d0e0f0"></div>
<div class="ln" style="left:13px;top:264.8px;font-size:12.2px;letter-spacing:0.15px;color:#1b4b86;-webkit-text-stroke:0.15px #1b4b86">Discovery</div>
<div class="abs" style="left:11px;top:315px;width:162px;height:1px;background:#d0e0f0"></div>
<div class="ln" style="left:13px;top:294.8px;font-size:12.2px;letter-spacing:0.15px;color:#1b4b86;-webkit-text-stroke:0.15px #1b4b86">Summary Judgment</div>
<div class="abs" style="left:11px;top:345px;width:162px;height:1px;background:#d0e0f0"></div>
<div class="ln" style="left:13px;top:324.8px;font-size:12.2px;letter-spacing:0.15px;color:#1b4b86;-webkit-text-stroke:0.15px #1b4b86">Choosing Forums</div>
<div class="abs" style="left:11px;top:375px;width:162px;height:1px;background:#d0e0f0"></div>
<div class="ln" style="left:13px;top:354.8px;font-size:12.2px;letter-spacing:0.15px;color:#1b4b86;-webkit-text-stroke:0.15px #1b4b86">What are the legal limit...</div>
<div class="abs" style="left:11px;top:405px;width:162px;height:1px;background:#d0e0f0"></div>
<div class="ln" style="left:13px;top:384.8px;font-size:12.2px;letter-spacing:0.15px;color:#1b4b86;-webkit-text-stroke:0.15px #1b4b86">Personal JDX</div>
<div class="ln" style="left:13px;top:414.8px;font-size:12.2px;letter-spacing:0.15px;color:#1b4b86;-webkit-text-stroke:0.15px #1b4b86">Personal JDX 2/ Strea...</div>
<div class="abs" style="left:0;top:436px;width:173px;height:30px;background:#fff;border-top:1px solid #b9d3ec;border-bottom:1px solid #b9d3ec"></div>
<div class="ln" style="left:13px;top:444.8px;font-size:12.2px;letter-spacing:0.15px;color:#2b7fc3;-webkit-text-stroke:0.15px #2b7fc3">Personal/General JDX</div>
</div>
</body></html>
